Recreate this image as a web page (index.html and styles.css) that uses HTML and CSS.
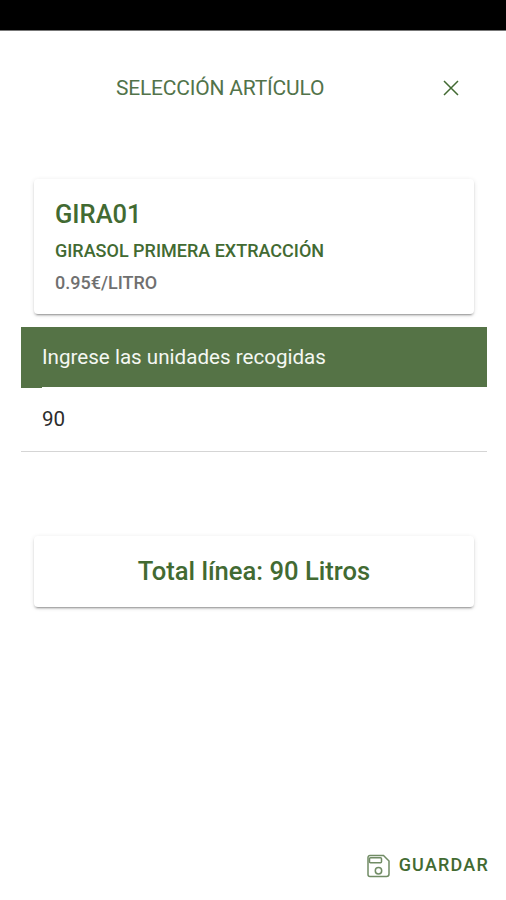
FILE: index.html
```html
<!DOCTYPE html>
<html lang="es">
<head>
<meta charset="utf-8">
<title>Selección artículo</title>
<link rel="stylesheet" href="styles.css">
</head>
<body>
<div class="status-bar"></div>
<header class="header">
  <h1 class="title">SELECCIÓN ARTÍCULO</h1>
  <button class="close" aria-label="Cerrar"><svg width="16" height="16" viewBox="0 0 16 16"><path d="M1 1l14 14M15 1L1 15"/></svg></button>
</header>
<main class="content">
  <section class="card article">
    <h2 class="code">GIRA01</h2>
    <p class="name">GIRASOL PRIMERA EXTRACCIÓN</p>
    <p class="price">0.95€/LITRO</p>
  </section>
  <section class="units">
    <div class="units-label">Ingrese las unidades recogidas</div>
    <div class="units-value">90</div>
  </section>
  <section class="card total">Total línea: 90 Litros</section>
</main>
<footer class="footer">
  <button class="save"><svg width="23" height="24" viewBox="0 0 23 24"><path d="M3 1.500h13.500l5.500 5.500v13a2.500 2.500 0 0 1-2.500 2.500H3A2 2 0 0 1 1 20.500v-17a2 2 0 0 1 2-2z"/><rect x="2.500" y="3.700" width="12" height="5" rx="1"/><circle cx="11.500" cy="16.800" r="3.200"/></svg><span>GUARDAR</span></button>
</footer>
</body>
</html>
```
FILE: styles.css
```css
* { box-sizing: border-box; }
body { margin: 0; height: 900px; display: flex; flex-direction: column; background: #fff; color: #426a32; font-family: Roboto, sans-serif; overflow: hidden; }
h1, h2, p { margin: 0; font-weight: 500; }
button { border: 0; padding: 0; background: none; color: inherit; font: inherit; display: flex; align-items: center; }
svg { fill: none; stroke: currentColor; stroke-width: 1.5; }
.status-bar { height: 31px; background: #000; border-bottom: 1px solid #777; }
.header { height: 115px; padding: 0 47px 2px 116px; display: flex; align-items: center; justify-content: space-between; }
.title { color: #52734a; font-size: 21px; font-weight: 400; line-height: 24px; letter-spacing: -.2px; }
.content { padding: 33px 19px 0 21px; }
.card { margin: 0 13px; border-radius: 4px; background: #fff; box-shadow: 0 3px 1px -2px rgba(0,0,0,.2), 0 2px 2px rgba(0,0,0,.14), 0 1px 5px rgba(0,0,0,.1); }
.article { height: 135px; padding: 20px 21px; }
.code { font-size: 25.5px; line-height: 30px; }
.name { margin-top: 11px; font-size: 18px; line-height: 22px; }
.price { margin-top: 10px; font-size: 18px; line-height: 22px; color: #707070; }
.units { margin-top: 13px; }
.units-label { height: 61px; padding-left: 21px; background: linear-gradient(#557346, #557346) 0 0 / 100% 60px no-repeat, linear-gradient(#557346, #557346) 0 0 / 21px 61px no-repeat; color: #f4f7f2; font-size: 20.6px; line-height: 60px; }
.units-value { height: 64px; padding-left: 21px; border-bottom: 1px solid #d5d5d5; color: #2c2c2c; font-size: 20.6px; line-height: 63px; }
.total { height: 71px; margin-top: 84px; text-align: center; font-size: 25.6px; font-weight: 500; line-height: 70px; }
.footer { margin-top: auto; height: 69px; padding-right: 17px; display: flex; align-items: center; justify-content: flex-end; }
.save { gap: 9px; font-size: 18px; font-weight: 500; letter-spacing: 1.2px; }
.save svg { stroke: #718c65; }
.save span { padding-bottom: 2px; }
```
